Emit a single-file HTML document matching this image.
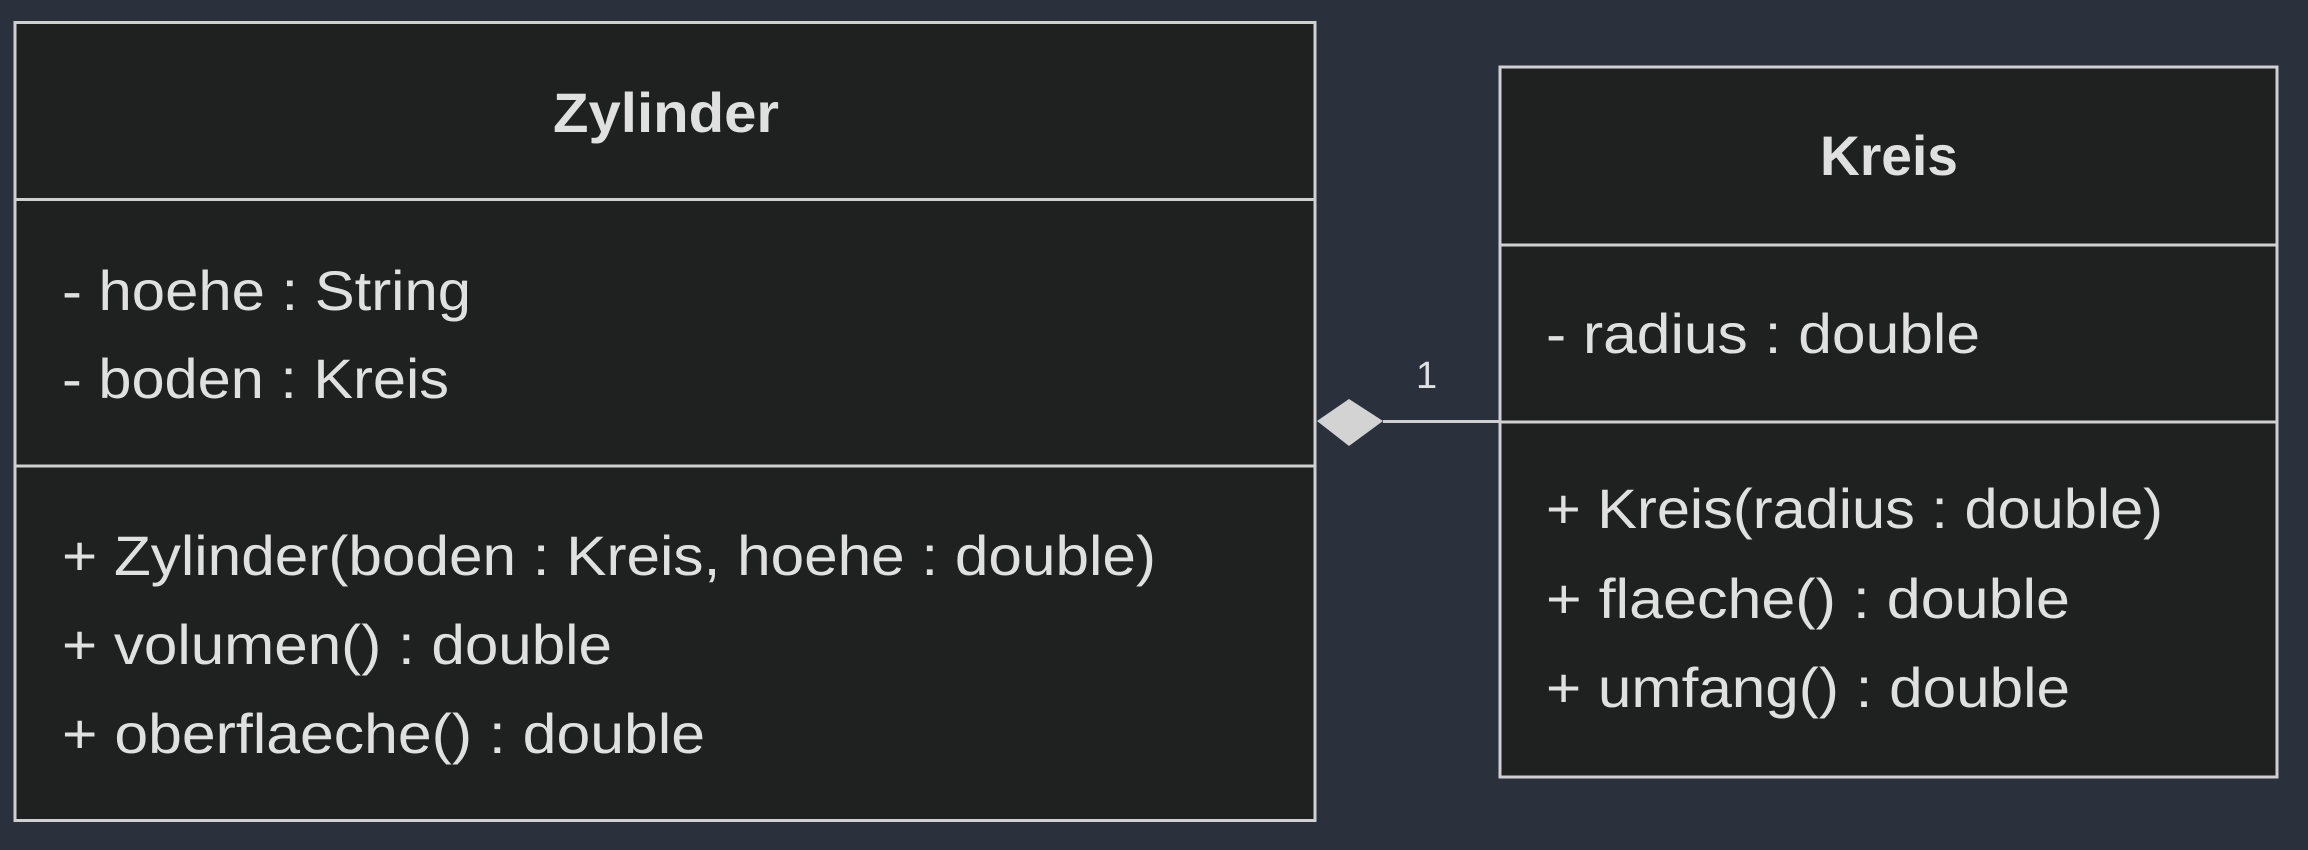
<!DOCTYPE html>
<html><head><meta charset="utf-8"><style>
html,body{margin:0;padding:0;background:#2a303c;width:2308px;height:850px;overflow:hidden}
svg{display:block}
text{font-family:"Liberation Sans",sans-serif;fill:#e0e0e0}
</style></head><body>
<svg width="2308" height="850" viewBox="0 0 2308 850" xmlns="http://www.w3.org/2000/svg">
<rect x="0" y="0" width="2308" height="850" fill="#2a303c"/>
<!-- Zylinder -->
<rect x="15" y="22.5" width="1300" height="798" fill="#1f2020" stroke="#d0d0d0" stroke-width="3"/>
<line x1="15" y1="199.5" x2="1315" y2="199.5" stroke="#d0d0d0" stroke-width="3"/>
<line x1="15" y1="466" x2="1315" y2="466" stroke="#d0d0d0" stroke-width="3"/>
<text x="553" y="132" font-size="56" font-weight="bold" textLength="226" lengthAdjust="spacingAndGlyphs">Zylinder</text>
<g font-size="56">
<text x="62" y="310" textLength="409" lengthAdjust="spacingAndGlyphs">- hoehe : String</text>
<text x="62" y="398" textLength="387" lengthAdjust="spacingAndGlyphs">- boden : Kreis</text>
<text x="62" y="575" textLength="1094" lengthAdjust="spacingAndGlyphs">+ Zylinder(boden : Kreis, hoehe : double)</text>
<text x="62" y="664" textLength="550" lengthAdjust="spacingAndGlyphs">+ volumen() : double</text>
<text x="62" y="753" textLength="643" lengthAdjust="spacingAndGlyphs">+ oberflaeche() : double</text>
</g>
<!-- Kreis -->
<rect x="1500" y="67" width="777" height="710" fill="#1f2020" stroke="#d0d0d0" stroke-width="3"/>
<line x1="1500" y1="245" x2="2277" y2="245" stroke="#d0d0d0" stroke-width="3"/>
<line x1="1500" y1="422" x2="2277" y2="422" stroke="#d0d0d0" stroke-width="3"/>
<text x="1820" y="175" font-size="56" font-weight="bold" textLength="138" lengthAdjust="spacingAndGlyphs">Kreis</text>
<g font-size="56">
<text x="1546" y="353" textLength="434" lengthAdjust="spacingAndGlyphs">- radius : double</text>
<text x="1546" y="528" textLength="617" lengthAdjust="spacingAndGlyphs">+ Kreis(radius : double)</text>
<text x="1546" y="618" textLength="524" lengthAdjust="spacingAndGlyphs">+ flaeche() : double</text>
<text x="1546" y="707" textLength="524" lengthAdjust="spacingAndGlyphs">+ umfang() : double</text>
</g>
<!-- connector -->
<line x1="1383" y1="421.5" x2="1500" y2="421.5" stroke="#d0d0d0" stroke-width="3"/>
<polygon points="1317,421 1349,399 1383,421 1349,446" fill="#d3d3d3"/>
<text x="1416" y="388" font-size="38">1</text>
</svg>
</body></html>
